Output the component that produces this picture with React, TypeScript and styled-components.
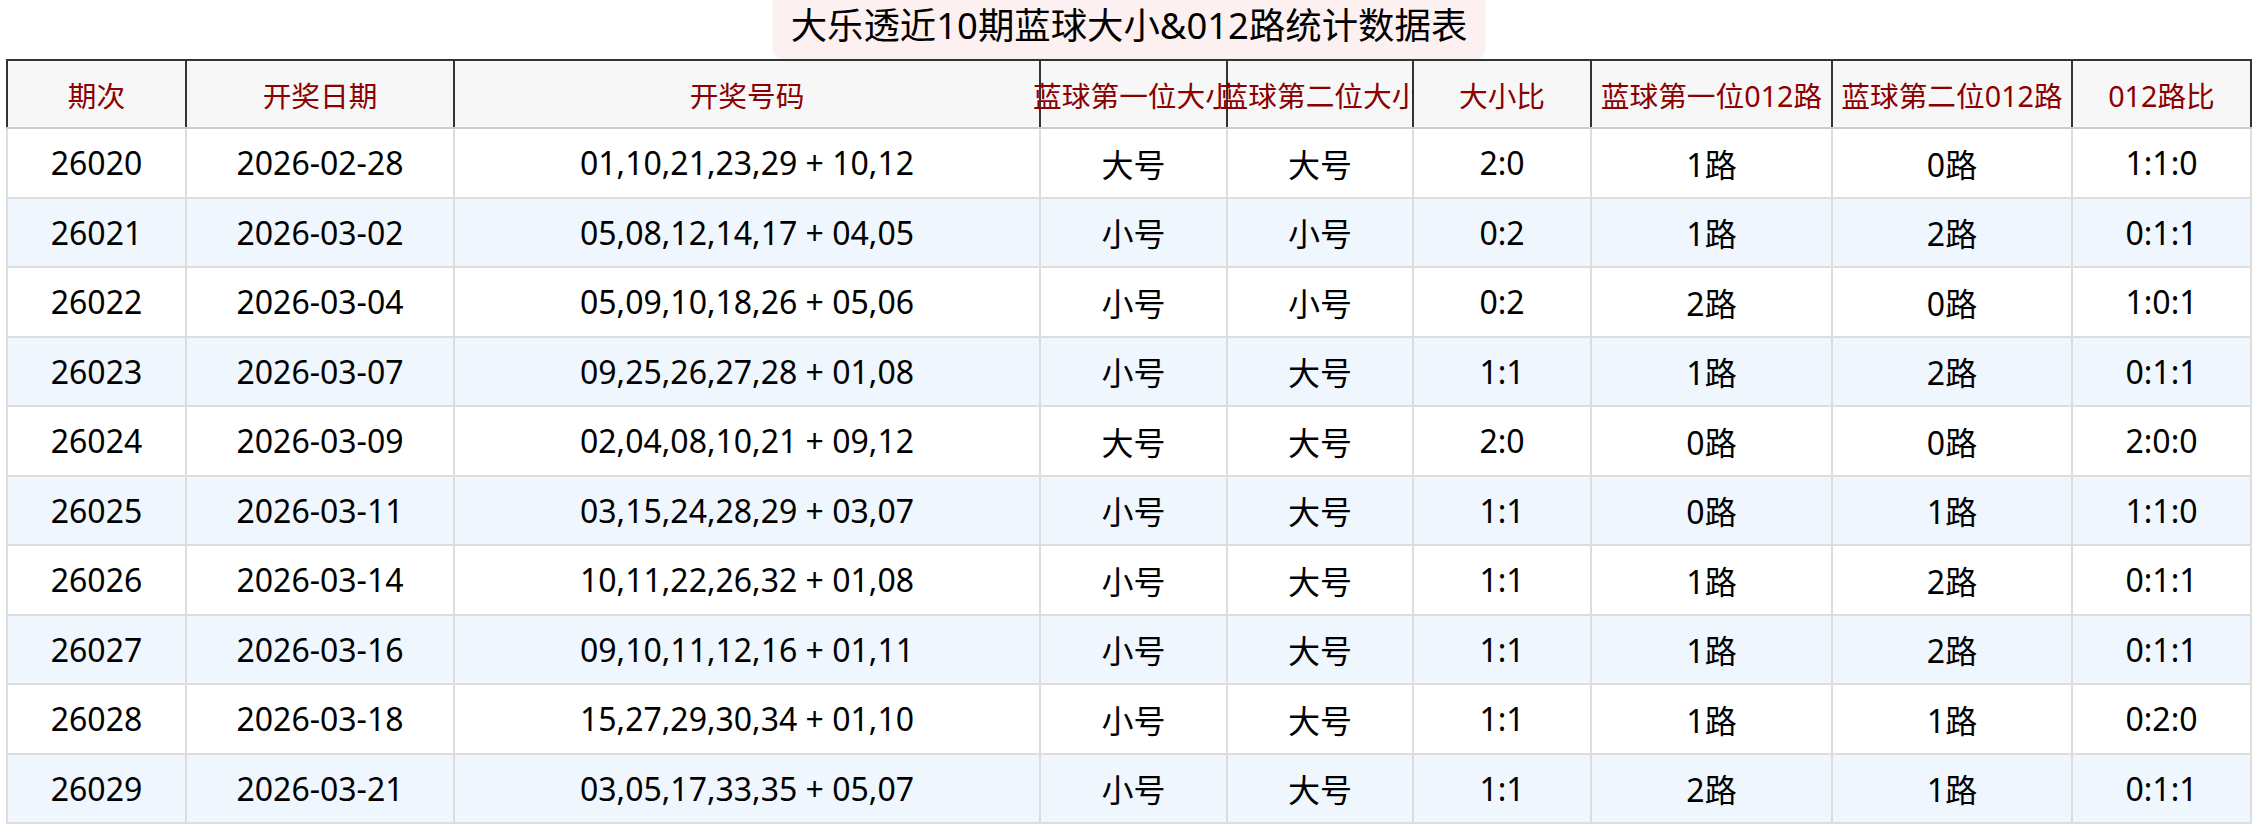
import React from "react";
import styled, { createGlobalStyle } from "styled-components";

const GlobalStyle = createGlobalStyle`
  body {
    margin: 0;
    background: #fff;
    font-family: "Noto Sans", "Noto Sans CJK SC", sans-serif;
    color: #000;
  }
`;

const Page = styled.div`
  display: flex;
  flex-direction: column;
  align-items: center;
  padding: 0 7px 8px;
`;

const Title = styled.h1`
  margin: 0 0 1px;
  padding: 0 18px 8px;
  font-size: 36.4px;
  font-weight: 400;
  line-height: 50px;
  background: #fdf0f0;
  border-radius: 0 0 10px 10px;
  box-shadow: 0 1px 2px rgba(0, 0, 0, 0.08);
`;

const Table = styled.table`
  width: 100%;
  table-layout: fixed;
  border-collapse: collapse;
`;

const HeadCell = styled.th`
  position: sticky;
  top: 0;
  height: 66px;
  padding: 0;
  background: #f7f7f7;
  color: #8b0000;
  font-size: 28.7px;
  font-weight: 400;
  border: 2px solid #333;
  border-bottom: 2px solid #ccc;
`;

const HeadLabel = styled.div`
  display: flex;
  justify-content: center;
  white-space: nowrap;
`;

const Row = styled.tr<{ $alt: boolean }>`
  background: ${(p) => (p.$alt ? "#eff6fe" : "#fff")};
`;

const Cell = styled.td`
  height: 67.5px;
  padding: 0;
  font-size: 32px;
  text-align: center;
  white-space: nowrap;
  border: 2px solid #ddd;
`;

const widths = [179, 268, 586, 187, 186, 178, 241, 240, 179];

const headers = [
  "期次",
  "开奖日期",
  "开奖号码",
  "蓝球第一位大小",
  "蓝球第二位大小",
  "大小比",
  "蓝球第一位012路",
  "蓝球第二位012路",
  "012路比",
];

const rows = [
  ["26020", "2026-02-28", "01,10,21,23,29 + 10,12", "大号", "大号", "2:0", "1路", "0路", "1:1:0"],
  ["26021", "2026-03-02", "05,08,12,14,17 + 04,05", "小号", "小号", "0:2", "1路", "2路", "0:1:1"],
  ["26022", "2026-03-04", "05,09,10,18,26 + 05,06", "小号", "小号", "0:2", "2路", "0路", "1:0:1"],
  ["26023", "2026-03-07", "09,25,26,27,28 + 01,08", "小号", "大号", "1:1", "1路", "2路", "0:1:1"],
  ["26024", "2026-03-09", "02,04,08,10,21 + 09,12", "大号", "大号", "2:0", "0路", "0路", "2:0:0"],
  ["26025", "2026-03-11", "03,15,24,28,29 + 03,07", "小号", "大号", "1:1", "0路", "1路", "1:1:0"],
  ["26026", "2026-03-14", "10,11,22,26,32 + 01,08", "小号", "大号", "1:1", "1路", "2路", "0:1:1"],
  ["26027", "2026-03-16", "09,10,11,12,16 + 01,11", "小号", "大号", "1:1", "1路", "2路", "0:1:1"],
  ["26028", "2026-03-18", "15,27,29,30,34 + 01,10", "小号", "大号", "1:1", "1路", "1路", "0:2:0"],
  ["26029", "2026-03-21", "03,05,17,33,35 + 05,07", "小号", "大号", "1:1", "2路", "1路", "0:1:1"],
];

const App: React.FC = () => {
  return (
    <>
      <GlobalStyle />
      <Page>
        <Title>大乐透近10期蓝球大小&amp;012路统计数据表</Title>
        <Table>
          <colgroup>
            {widths.map((w, i) => (
              <col key={i} style={{ width: w }} />
            ))}
          </colgroup>
          <thead>
            <tr>
              {headers.map((h) => (
                <HeadCell key={h}>
                  <HeadLabel>{h}</HeadLabel>
                </HeadCell>
              ))}
            </tr>
          </thead>
          <tbody>
            {rows.map((r, i) => (
              <Row key={r[0]} $alt={i % 2 === 1}>
                {r.map((v, j) => (
                  <Cell key={j}>{v}</Cell>
                ))}
              </Row>
            ))}
          </tbody>
        </Table>
      </Page>
    </>
  );
};

export default App;
